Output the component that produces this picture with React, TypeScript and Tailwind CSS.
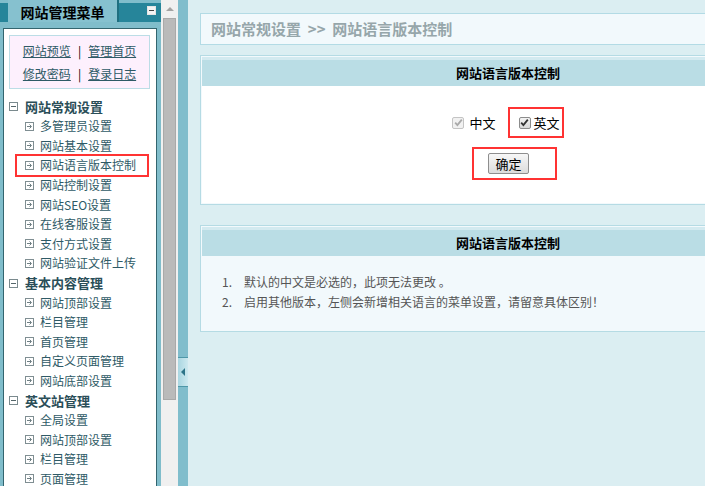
import { ReactNode } from 'react';

const font = "font-['SimSun','Noto_Sans_CJK_SC',sans-serif]";

const menu: { title: string; items: { label: string; active?: boolean }[] }[] = [
    {
        title: '网站常规设置',
        items: [
            { label: '多管理员设置' },
            { label: '网站基本设置' },
            { label: '网站语言版本控制', active: true },
            { label: '网站控制设置' },
            { label: '网站SEO设置' },
            { label: '在线客服设置' },
            { label: '支付方式设置' },
            { label: '网站验证文件上传' },
        ],
    },
    {
        title: '基本内容管理',
        items: [
            { label: '网站顶部设置' },
            { label: '栏目管理' },
            { label: '首页管理' },
            { label: '自定义页面管理' },
            { label: '网站底部设置' },
        ],
    },
    {
        title: '英文站管理',
        items: [
            { label: '全局设置' },
            { label: '网站顶部设置' },
            { label: '栏目管理' },
            { label: '页面管理' },
        ],
    },
];

function MinusBox() {
    return (
        <span className="w-[9px] h-[9px] border border-[#7a8a8e] bg-white flex items-center justify-center shrink-0">
            <span className="w-[5px] h-px bg-[#55666a]" />
        </span>
    );
}

function ArrowBox() {
    return (
        <svg width="9" height="9" viewBox="0 0 9 9" className="shrink-0">
            <rect x="0.5" y="0.5" width="8" height="8" fill="#fff" stroke="#7f8e92" />
            <path d="M2 4.5h4M4.5 2.5l2 2-2 2" fill="none" stroke="#6f7f83" strokeWidth="1" />
        </svg>
    );
}

function Check({ disabled }: { disabled?: boolean }) {
    return (
        <span
            className={
                'w-[12px] h-[12px] rounded-[2px] border flex items-center justify-center ' +
                (disabled ? 'border-[#c4c4c4] bg-[#f1f1f1]' : 'border-[#8c8c8c] bg-gradient-to-b from-[#f4f4f4] to-[#d8d8d8]')
            }
        >
            <svg width="9" height="9" viewBox="0 0 9 9">
                <path d="M1.2 4.6l2.2 2.4L7.8 1.6" fill="none" stroke={disabled ? '#a9a9a9' : '#333'} strokeWidth="1.8" />
            </svg>
        </span>
    );
}

function Panel({ title, bodyClass, children }: { title: string; bodyClass: string; children: ReactNode }) {
    return (
        <div className="w-[616px] border border-[#b5dbe4] bg-[#f2f9fc] p-px">
            <div className="h-[29px] border-t-[3px] border-[#d3eaf0] bg-[#badde5] flex items-center justify-center text-[13px] font-bold text-black">
                {title}
            </div>
            <div className={bodyClass}>{children}</div>
        </div>
    );
}

export default function App() {
    return (
        <div className={'w-[705px] h-[486px] flex overflow-hidden text-[12px] ' + font}>
            {/* Sidebar */}
            <div className="w-[161px] shrink-0 bg-[#80bdcb] flex flex-col">
                <div className="h-[22px] flex">
                    <div className="w-[8px] mt-[3px] bg-[#26859a]" />
                    <div className="w-[111px] bg-[#86c1cf] border-r-2 border-[#1f6f80] flex items-center justify-center text-[14px] font-bold text-black pt-[2px]">
                        网站管理菜单
                    </div>
                    <div className="flex-1 mt-[3px] bg-[#26859a] flex justify-end pr-[5px] pt-[3px]">
                        <span className="w-[9px] h-[9px] border border-[#e5e5e5] bg-[#f4f4f4] flex items-center justify-center">
                            <span className="w-[5px] h-px bg-[#444]" />
                        </span>
                    </div>
                </div>
                <div className="mt-[6px] ml-[3px] w-[154px] flex-1 border-x border-t border-[#33656f] bg-white">
                    <div className="mt-[6px] ml-[5px] w-[141px] h-[54px] border border-[#bcdde6] bg-[#fdf0fd] flex flex-col items-center justify-center gap-[6px] text-[12px] leading-[17px] text-[#2e5a66]">
                        <div className="flex items-center gap-[7px]">
                            <span className="underline">网站预览</span>
                            <span className="text-black">|</span>
                            <span className="underline">管理首页</span>
                        </div>
                        <div className="flex items-center gap-[7px]">
                            <span className="underline">修改密码</span>
                            <span className="text-black">|</span>
                            <span className="underline">登录日志</span>
                        </div>
                    </div>
                    <div className="mt-[8px]">
                        {menu.map((g) => (
                            <div key={g.title}>
                                <div className="h-[19.5px] flex items-center gap-[7px] pl-[5px] text-[13px] font-bold text-[#2a4e58]">
                                    <MinusBox />
                                    {g.title}
                                </div>
                                {g.items.map((it, i) => (
                                    <div key={i} className="h-[19.6px] flex items-center pl-[13px]">
                                        <div
                                            className={
                                                'flex items-center gap-[6px] h-[23px] pl-[8px] w-[134px] text-[12px] text-[#2e5a66] ' +
                                                (it.active ? 'border-2 border-[#ff3333] -ml-[2px] pl-[6px]' : '')
                                            }
                                        >
                                            <ArrowBox />
                                            {it.label}
                                        </div>
                                    </div>
                                ))}
                            </div>
                        ))}
                    </div>
                </div>
            </div>

            {/* Scrollbar */}
            <div className="w-[17px] shrink-0 bg-[#f0f0f0] flex flex-col items-center">
                <div className="h-[18px] flex items-center justify-center">
                    <span className="w-0 h-0 border-x-[4px] border-x-transparent border-b-[4px] border-b-[#a3a3a3]" />
                </div>
                <div className="w-[13px] h-[382px] bg-[#bababa] border border-[#a9a9a9]" />
            </div>

            {/* Collapse bar */}
            <div className="w-[10px] shrink-0 bg-[#80bdcc] flex flex-col">
                <div className="h-[357px]" />
                <div className="h-[30px] border-y border-[#4e97a8] bg-gradient-to-r from-[#a9d6e1] to-[#cde9ef] flex items-center justify-center">
                    <span className="w-0 h-0 border-y-[4px] border-y-transparent border-r-[4px] border-r-[#2d7488]" />
                </div>
            </div>

            {/* Main */}
            <div className="flex-1 bg-[#dbeef2] overflow-hidden pl-[12px] pt-[13px] flex flex-col gap-[10px]">
                <div className="w-[616px] h-[32px] border border-[#b3dbe5] bg-[#f2f9fc] flex items-center pl-[10px] text-[15px] font-bold text-[#96a6aa]">
                    网站常规设置&nbsp;&nbsp;&gt;&gt;&nbsp;&nbsp;网站语言版本控制
                </div>

                <Panel title="网站语言版本控制" bodyClass="h-[117px] bg-white flex flex-col items-center">
                    <div className="h-[33px] mt-[20px] flex items-center">
                        <div className="flex items-center gap-[5px] text-[13px] text-black">
                            <Check disabled />
                            中文
                        </div>
                        <div className="ml-[12px] h-[31px] border-2 border-[#ff3333] flex items-center gap-[3px] pl-[9px] pr-[2px] text-[13px] text-black">
                            <Check />
                            英文
                        </div>
                    </div>
                    <div className="mt-[8px] h-[33px] w-[85px] border-2 border-[#ff3333] flex items-center pl-[14px] ml-[13px]">
                        <button className="w-[41px] h-[21px] border border-[#8e8e8e] rounded-[2px] bg-gradient-to-b from-[#f7f7f7] to-[#dcdcdc] text-[13px] text-black flex items-center justify-center">
                            确定
                        </button>
                    </div>
                </Panel>

                <div className="mt-[10px]">
                    <Panel title="网站语言版本控制" bodyClass="h-[74px] bg-[#f2f9fc] pt-[16px] pl-[20px] flex flex-col text-[12px] leading-[20px] text-[#555]">
                        <div className="flex gap-[12px]">
                            <span>1.</span>
                            <span>默认的中文是必选的，此项无法更改 。</span>
                        </div>
                        <div className="flex gap-[12px]">
                            <span>2.</span>
                            <span>启用其他版本，左侧会新增相关语言的菜单设置，请留意具体区别！</span>
                        </div>
                    </Panel>
                </div>
            </div>
        </div>
    );
}
